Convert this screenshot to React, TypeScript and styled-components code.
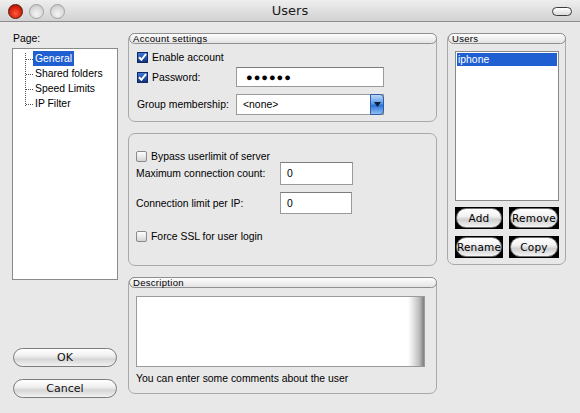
import React from "react";
import styled, { createGlobalStyle, css } from "styled-components";

const Global = createGlobalStyle`
  html, body { margin: 0; padding: 0; background: #e8e8e8; }
  body { font-family: "Liberation Sans", Arial, sans-serif; font-size: 10.4px; color: #000; }
  * { box-sizing: border-box; }
`;

const Window = styled.div`
  width: 580px;
  height: 413px;
  display: flex;
  flex-direction: column;
  background: #e8e8e8;
  overflow: hidden;
`;

const TitleBar = styled.div`
  position: relative;
  height: 22px;
  flex: none;
  display: flex;
  align-items: center;
  justify-content: center;
  background: linear-gradient(#eeeeee, #d2d2d2);
  border-bottom: 1px solid #8e8e8e;
`;

const Lights = styled.div`
  position: absolute;
  left: 8px;
  top: 4px;
  display: flex;
  gap: 6px;
`;

const Light = styled.span<{ $red?: boolean }>`
  width: 15px;
  height: 15px;
  border-radius: 50%;
  ${(p) =>
    p.$red
      ? css`
          background: radial-gradient(circle at 50% 65%, #ff5a3c 0%, #d8220e 55%, #8a0d02 100%);
          border: 1px solid #5a1408;
        `
      : css`
          background: radial-gradient(circle at 50% 70%, #f4f4f4 0%, #d9d9d9 60%, #b9b9b9 100%);
          border: 1px solid #a2a2a2;
        `}
`;

const Capsule = styled.span`
  position: absolute;
  right: 8px;
  top: 7px;
  width: 20px;
  height: 9px;
  border-radius: 5px;
  border: 1px solid #3c3c3c;
  background: linear-gradient(#ffffff, #dcdcdc);
`;

const Title = styled.div`
  font-family: "DejaVu Sans", "Liberation Sans", sans-serif;
  font-size: 13px;
  color: #1a1a1a;
`;

const Content = styled.div`
  flex: 1;
  display: grid;
  grid-template-columns: 106px 309px 119px;
  column-gap: 10px;
  padding: 11px 14px 15px 12px;
`;

const LeftCol = styled.div`
  display: flex;
  flex-direction: column;
`;

const PageLabel = styled.div`
  height: 15px;
  line-height: 11px;
  padding-left: 1px;
`;

const Tree = styled.div`
  height: 232px;
  background: #fff;
  border: 1px solid #8a8a8a;
  position: relative;
  padding: 2px 0 0 12px;
`;

const TreeLines = styled.svg`
  position: absolute;
  left: 12px;
  top: 4px;
`;

const TreeItem = styled.div<{ $selected?: boolean }>`
  height: 15px;
  line-height: 15px;
  margin-left: 8px;
  padding: 0 2px;
  display: inline-block;
  white-space: nowrap;
  ${(p) =>
    p.$selected &&
    css`
      background: #1f5fd2;
      color: #fff;
    `}
`;

const TreeRow = styled.div`
  height: 15px;
`;

const LeftButtons = styled.div`
  margin-top: auto;
  display: flex;
  flex-direction: column;
  gap: 12px;
`;

const PillButton = styled.div`
  height: 19px;
  margin: 0 1px;
  border-radius: 10px;
  border: 1px solid #7c7c7c;
  background: linear-gradient(#ffffff 0%, #f0f0f0 40%, #d6d6d6 60%, #f2f2f2 100%);
  display: flex;
  align-items: center;
  justify-content: center;
  font-family: "DejaVu Sans", sans-serif;
  font-size: 11px;
  color: #111;
`;

const MidCol = styled.div`
  display: flex;
  flex-direction: column;
  gap: 11px;
`;

const Group = styled.div<{ $h: number }>`
  height: ${(p) => p.$h}px;
  border: 1px solid #a9a9a9;
  border-radius: 7px;
  display: flex;
  flex-direction: column;
`;

const Tab = styled.div`
  height: 11px;
  margin: -1px -1px 0 0;
  border: 1px solid #8f8f8f;
  border-radius: 6px;
  background: linear-gradient(#fdfdfd, #e4e4e4);
  font-family: "Liberation Sans", Arial, sans-serif;
  font-size: 9.5px;
  letter-spacing: 0.3px;
  line-height: 9px;
  padding-left: 3px;
  color: #000;
  flex: none;
`;

const FormGrid = styled.div<{ $cols: string; $pad: string }>`
  display: grid;
  grid-template-columns: ${(p) => p.$cols};
  padding: ${(p) => p.$pad};
  align-items: center;
`;

const Row = styled.div<{ $h: number; $mt?: number }>`
  grid-column: 1 / -1;
  display: grid;
  grid-template-columns: subgrid;
  align-items: center;
  height: ${(p) => p.$h}px;
  margin-top: ${(p) => p.$mt ?? 0}px;
`;

const CheckLabel = styled.label`
  display: flex;
  align-items: center;
  gap: 4px;
  white-space: nowrap;
`;

const Box = styled.span<{ $checked?: boolean }>`
  width: 11px;
  height: 11px;
  flex: none;
  display: inline-flex;
  align-items: center;
  justify-content: center;
  ${(p) =>
    p.$checked
      ? css`
          background: linear-gradient(#3f78d8, #12347e);
          border: 1px solid #0f2a66;
        `
      : css`
          border: 1px solid #8a8a8a;
          border-radius: 2px;
          background: linear-gradient(#ffffff, #d4d4d4);
        `}
`;

const Check = ({ checked }: { checked?: boolean }) => (
  <Box $checked={checked}>
    {checked && (
      <svg width="9" height="9" viewBox="0 0 9 9">
        <path d="M1 4.2 L3.4 6.8 L8 1" stroke="#fff" strokeWidth="2" fill="none" />
      </svg>
    )}
  </Box>
);

const TextBox = styled.div<{ $w: number; $h: number }>`
  width: ${(p) => p.$w}px;
  height: ${(p) => p.$h}px;
  background: #fff;
  border: 1px solid #9a9a9a;
  border-top-color: #7c7c7c;
  display: flex;
  align-items: center;
  padding-left: 6px;
`;

const Dots = styled.span`
  letter-spacing: 1px;
  font-size: 11px;
  padding-left: 3px;
`;

const Combo = styled.div`
  width: 148px;
  height: 21px;
  background: #fff;
  border: 1px solid #9a9a9a;
  display: flex;
  align-items: center;
  padding-left: 6px;
  position: relative;
`;

const ComboArrow = styled.span`
  position: absolute;
  right: -1px;
  top: -1px;
  width: 14px;
  height: 21px;
  border-radius: 0 4px 4px 0;
  border: 1px solid #2d5fa8;
  background: linear-gradient(#bcd8f8 0%, #5b9ae6 45%, #2d72d8 55%, #8fc0f4 100%);
  display: flex;
  align-items: center;
  justify-content: center;
`;

const DescArea = styled.div`
  margin: 8px 11px 0 7px;
  height: 71px;
  background: #fff;
  border: 1px solid #9a9a9a;
  display: flex;
  justify-content: flex-end;
`;

const ScrollTrack = styled.div`
  width: 16px;
  background: linear-gradient(to right, #ffffff 0%, #e6e6e6 30%, #bdbdbd 70%, #7e7e7e 100%);
`;

const Hint = styled.div`
  margin: 5px 0 0 7px;
  height: 14px;
  line-height: 14px;
`;

const UsersBody = styled.div`
  padding: 7px 6px 0 7px;
  display: flex;
  flex-direction: column;
`;

const UserList = styled.div`
  height: 150px;
  background: #fff;
  border: 1px solid #8a8a8a;
  padding: 1px;
`;

const UserItem = styled.div<{ $selected?: boolean }>`
  height: 13px;
  line-height: 13px;
  padding-left: 1px;
  ${(p) =>
    p.$selected &&
    css`
      background: #1f5fd2;
      color: #fff;
    `}
`;

const UserButtons = styled.div`
  margin-top: 6px;
  display: grid;
  grid-template-columns: 48px 50px;
  column-gap: 6px;
  row-gap: 7px;
`;

const BlackCell = styled.div`
  height: 22px;
  background: #000;
  display: flex;
  align-items: center;
  justify-content: center;
`;

const SmallPill = styled.div`
  width: 100%;
  height: 20px;
  margin: 0 1px;
  border-radius: 10px;
  border: 1px solid #6e6e6e;
  background: linear-gradient(#ffffff 0%, #f2f2f2 40%, #cfcfcf 60%, #f4f4f4 100%);
  display: flex;
  align-items: center;
  justify-content: center;
  font-family: "DejaVu Sans", sans-serif;
  font-size: 10.5px;
  letter-spacing: 0.2px;
`;

export default function App() {
  return (
    <>
      <Global />
      <Window>
        <TitleBar>
          <Lights>
            <Light $red />
            <Light />
            <Light />
          </Lights>
          <Title>Users</Title>
          <Capsule />
        </TitleBar>
        <Content>
          <LeftCol>
            <PageLabel>Page:</PageLabel>
            <Tree>
              <TreeLines width="10" height="56" viewBox="0 0 10 56">
                <g stroke="#555" strokeWidth="1" strokeDasharray="1 1" fill="none">
                  <path d="M0.5 0 V53" />
                  <path d="M1 6.5 H8" />
                  <path d="M1 21.5 H8" />
                  <path d="M1 36.5 H8" />
                  <path d="M1 51.5 H8" />
                </g>
              </TreeLines>
              <TreeRow>
                <TreeItem $selected>General</TreeItem>
              </TreeRow>
              <TreeRow>
                <TreeItem>Shared folders</TreeItem>
              </TreeRow>
              <TreeRow>
                <TreeItem>Speed Limits</TreeItem>
              </TreeRow>
              <TreeRow>
                <TreeItem>IP Filter</TreeItem>
              </TreeRow>
            </Tree>
            <LeftButtons>
              <PillButton>OK</PillButton>
              <PillButton>Cancel</PillButton>
            </LeftButtons>
          </LeftCol>

          <MidCol>
            <Group $h={89}>
              <Tab>Account settings</Tab>
              <FormGrid $cols="99px 148px" $pad="6px 0 0 8px">
                <Row $h={14}>
                  <CheckLabel>
                    <Check checked />
                    Enable account
                  </CheckLabel>
                </Row>
                <Row $h={20} $mt={3}>
                  <CheckLabel>
                    <Check checked />
                    Password:
                  </CheckLabel>
                  <TextBox $w={148} $h={20}>
                    <Dots>●●●●●●</Dots>
                  </TextBox>
                </Row>
                <Row $h={21} $mt={7}>
                  <span>Group membership:</span>
                  <Combo>
                    &lt;none&gt;
                    <ComboArrow>
                      <svg width="7" height="5" viewBox="0 0 7 5">
                        <path d="M0 0 H7 L3.5 5 Z" fill="#0d1e3c" />
                      </svg>
                    </ComboArrow>
                  </Combo>
                </Row>
              </FormGrid>
            </Group>

            <Group $h={133}>
              <FormGrid $cols="144px 73px" $pad="15px 0 0 7px">
                <Row $h={14}>
                  <CheckLabel>
                    <Check />
                    Bypass userlimit of server
                  </CheckLabel>
                </Row>
                <Row $h={23} $mt={-1}>
                  <span>Maximum connection count:</span>
                  <TextBox $w={73} $h={23}>0</TextBox>
                </Row>
                <Row $h={22} $mt={7}>
                  <span>Connection limit per IP:</span>
                  <TextBox $w={72} $h={22}>0</TextBox>
                </Row>
                <Row $h={14} $mt={15}>
                  <CheckLabel>
                    <Check />
                    Force SSL for user login
                  </CheckLabel>
                </Row>
              </FormGrid>
            </Group>

            <Group $h={117}>
              <Tab>Description</Tab>
              <DescArea>
                <ScrollTrack />
              </DescArea>
              <Hint>You can enter some comments about the user</Hint>
            </Group>
          </MidCol>

          <div>
            <Group $h={232}>
              <Tab>Users</Tab>
              <UsersBody>
                <UserList>
                  <UserItem $selected>iphone</UserItem>
                </UserList>
                <UserButtons>
                  <BlackCell>
                    <SmallPill>Add</SmallPill>
                  </BlackCell>
                  <BlackCell>
                    <SmallPill>Remove</SmallPill>
                  </BlackCell>
                  <BlackCell>
                    <SmallPill>Rename</SmallPill>
                  </BlackCell>
                  <BlackCell>
                    <SmallPill>Copy</SmallPill>
                  </BlackCell>
                </UserButtons>
              </UsersBody>
            </Group>
          </div>
        </Content>
      </Window>
    </>
  );
}
